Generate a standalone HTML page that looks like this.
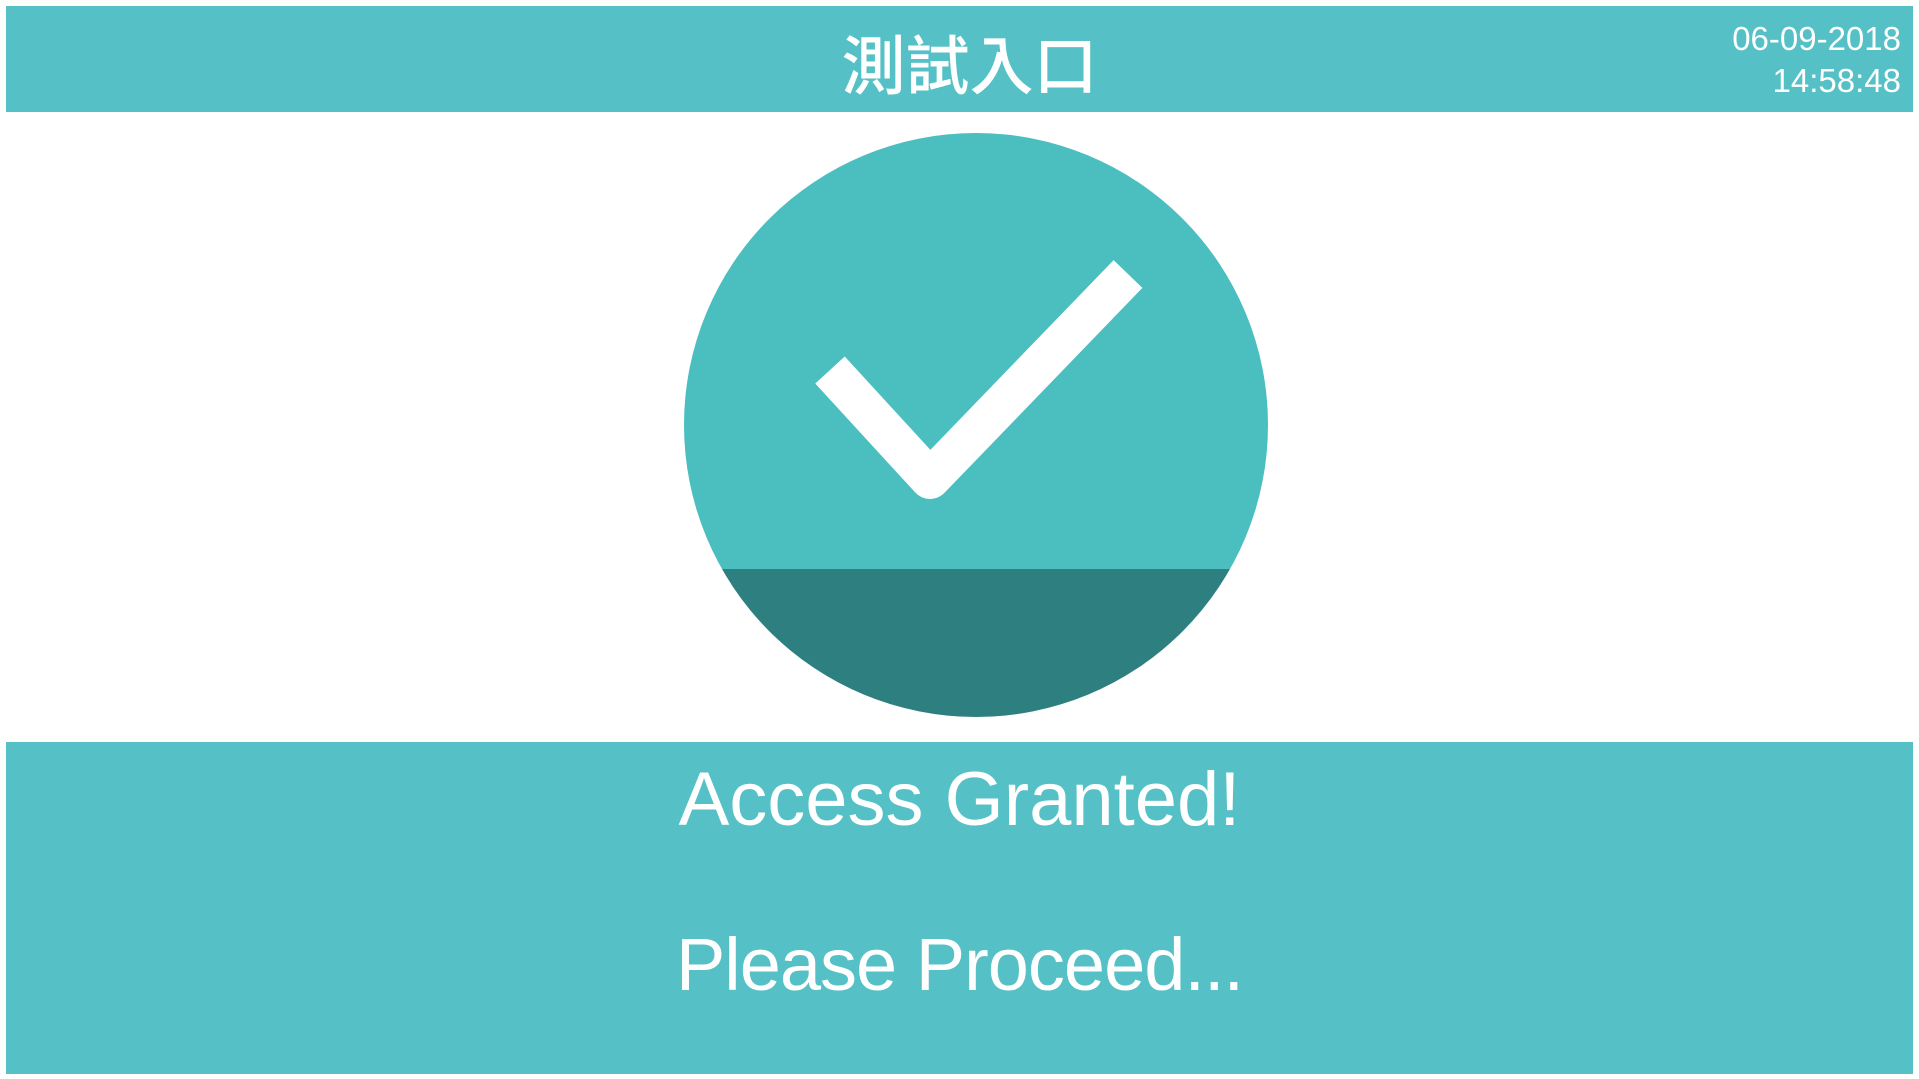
<!DOCTYPE html>
<html><head><meta charset="utf-8"><style>
html,body{margin:0;padding:0;width:1919px;height:1079px;background:#fff;overflow:hidden;position:relative;font-family:"Liberation Sans","Noto Sans CJK TC",sans-serif;}
.hdr{position:absolute;left:6px;top:6px;width:1907px;height:106px;background:#55c1c6;}
.title{position:absolute;left:10px;width:100%;top:20px;text-align:center;color:#fff;font-size:64px;line-height:72px;font-family:"Noto Sans CJK TC",sans-serif;font-weight:500;}
.dt{position:absolute;right:12px;top:12px;color:#fff;font-size:33px;line-height:42px;text-align:right;}
.bot{position:absolute;left:6px;top:742px;width:1907px;height:332px;background:#55c1c6;color:#fff;text-align:center;}
.l1,.l2{position:absolute;left:0;width:100%;font-size:76px;line-height:1;color:#fff;text-align:center}
.l1{top:762px}
.l2{top:928px;font-size:74px;letter-spacing:-1px}
</style></head><body>
<div class="hdr"><div class="title">測試入口</div><div class="dt">06-09-2018<br>14:58:48</div></div>
<svg style="position:absolute;left:0;top:0" width="1919" height="1079">
<defs><clipPath id="c"><circle cx="976" cy="425" r="292"/></clipPath></defs>
<g clip-path="url(#c)">
<rect x="680" y="130" width="600" height="440" fill="#4bbec0"/>
<rect x="680" y="569" width="600" height="160" fill="#2e7f80"/>
</g>
<polyline points="830,370 930,479 1128,274" fill="none" stroke="#fff" stroke-width="40" stroke-linejoin="round" stroke-linecap="butt"/>
</svg>
<div class="bot"></div>
<div class="l1">Access Granted!</div>
<div class="l2">Please Proceed...</div>
</body></html>
